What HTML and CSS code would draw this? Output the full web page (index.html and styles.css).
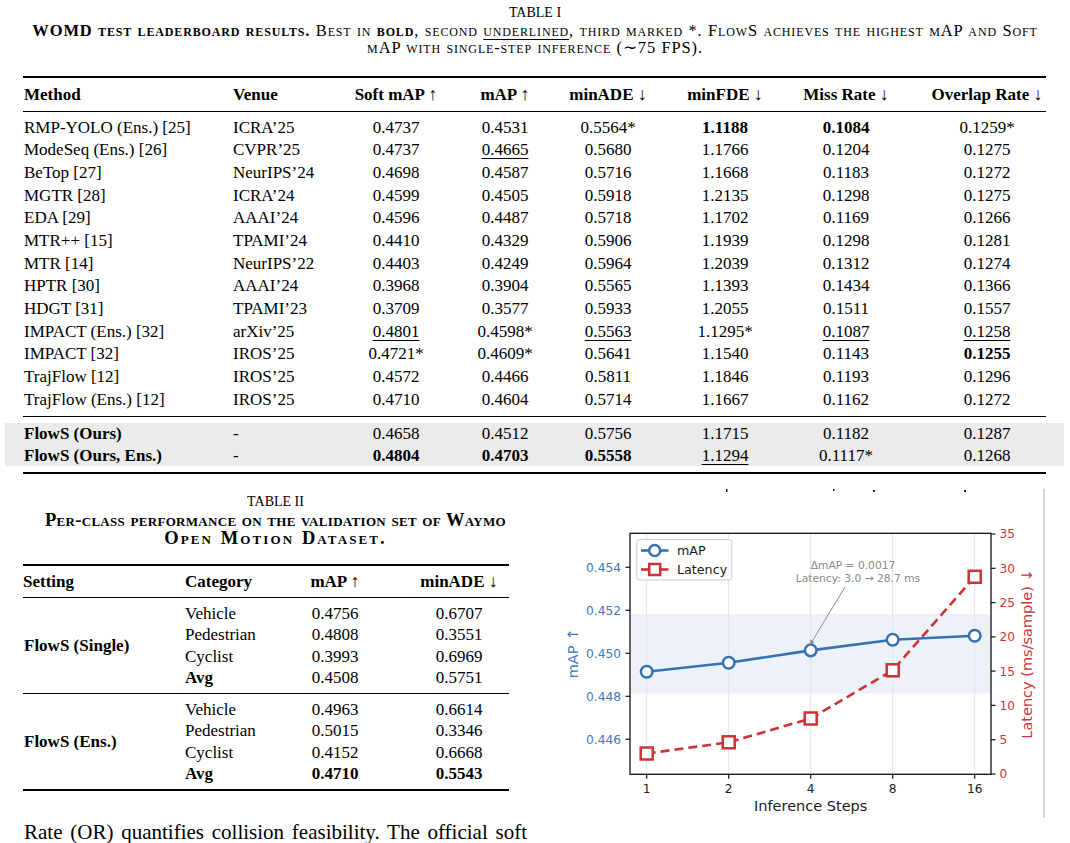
FILE: index.html
```html
<!DOCTYPE html>
<html lang="en">
<head>
  <meta charset="UTF-8" />
  <title>FlowS - Results</title>
  <link rel="stylesheet" href="styles.css">
</head>
<body>
  <div class="table-title">TABLE I</div>
  <div class="caption">
    <b>WOMD test leaderboard results.</b> Best in <b>bold</b>, second <u>underlined</u>, third marked *. FlowS achieves the highest mAP and Soft<br>
    mAP with single-step inference (∼75 FPS).
  </div>

  <div class="t1">
    <div class="head">
      <div class="row">
        <div>Method</div><div class="venue">Venue</div>
        <div class="c">Soft mAP <span class="arr">↑</span></div>
        <div class="c">mAP <span class="arr">↑</span></div>
        <div class="c">minADE <span class="arr">↓</span></div>
        <div class="c">minFDE <span class="arr">↓</span></div>
        <div class="c">Miss Rate <span class="arr">↓</span></div>
        <div class="c last">Overlap Rate <span class="arr">↓</span></div>
      </div>
    </div>

    <div class="body">
      <div class="row"><div>RMP-YOLO (Ens.) [25]</div><div class="venue">ICRA’25</div><div class="c">0.4737</div><div class="c">0.4531</div><div class="c">0.5564*</div><div class="c"><b>1.1188</b></div><div class="c"><b>0.1084</b></div><div class="c last">0.1259*</div></div>
      <div class="row"><div>ModeSeq (Ens.) [26]</div><div class="venue">CVPR’25</div><div class="c">0.4737</div><div class="c"><u>0.4665</u></div><div class="c">0.5680</div><div class="c">1.1766</div><div class="c">0.1204</div><div class="c last">0.1275</div></div>
      <div class="row"><div>BeTop [27]</div><div class="venue">NeurIPS’24</div><div class="c">0.4698</div><div class="c">0.4587</div><div class="c">0.5716</div><div class="c">1.1668</div><div class="c">0.1183</div><div class="c last">0.1272</div></div>
      <div class="row"><div>MGTR [28]</div><div class="venue">ICRA’24</div><div class="c">0.4599</div><div class="c">0.4505</div><div class="c">0.5918</div><div class="c">1.2135</div><div class="c">0.1298</div><div class="c last">0.1275</div></div>
      <div class="row"><div>EDA [29]</div><div class="venue">AAAI’24</div><div class="c">0.4596</div><div class="c">0.4487</div><div class="c">0.5718</div><div class="c">1.1702</div><div class="c">0.1169</div><div class="c last">0.1266</div></div>
      <div class="row"><div>MTR++ [15]</div><div class="venue">TPAMI’24</div><div class="c">0.4410</div><div class="c">0.4329</div><div class="c">0.5906</div><div class="c">1.1939</div><div class="c">0.1298</div><div class="c last">0.1281</div></div>
      <div class="row"><div>MTR [14]</div><div class="venue">NeurIPS’22</div><div class="c">0.4403</div><div class="c">0.4249</div><div class="c">0.5964</div><div class="c">1.2039</div><div class="c">0.1312</div><div class="c last">0.1274</div></div>
      <div class="row"><div>HPTR [30]</div><div class="venue">AAAI’24</div><div class="c">0.3968</div><div class="c">0.3904</div><div class="c">0.5565</div><div class="c">1.1393</div><div class="c">0.1434</div><div class="c last">0.1366</div></div>
      <div class="row"><div>HDGT [31]</div><div class="venue">TPAMI’23</div><div class="c">0.3709</div><div class="c">0.3577</div><div class="c">0.5933</div><div class="c">1.2055</div><div class="c">0.1511</div><div class="c last">0.1557</div></div>
      <div class="row"><div>IMPACT (Ens.) [32]</div><div class="venue">arXiv’25</div><div class="c"><u>0.4801</u></div><div class="c">0.4598*</div><div class="c"><u>0.5563</u></div><div class="c">1.1295*</div><div class="c"><u>0.1087</u></div><div class="c last"><u>0.1258</u></div></div>
      <div class="row"><div>IMPACT [32]</div><div class="venue">IROS’25</div><div class="c">0.4721*</div><div class="c">0.4609*</div><div class="c">0.5641</div><div class="c">1.1540</div><div class="c">0.1143</div><div class="c last"><b>0.1255</b></div></div>
      <div class="row"><div>TrajFlow [12]</div><div class="venue">IROS’25</div><div class="c">0.4572</div><div class="c">0.4466</div><div class="c">0.5811</div><div class="c">1.1846</div><div class="c">0.1193</div><div class="c last">0.1296</div></div>
      <div class="row"><div>TrajFlow (Ens.) [12]</div><div class="venue">IROS’25</div><div class="c">0.4710</div><div class="c">0.4604</div><div class="c">0.5714</div><div class="c">1.1667</div><div class="c">0.1162</div><div class="c last">0.1272</div></div>
    </div>

    <div class="ours">
      <div class="row"><div><b>FlowS (Ours)</b></div><div class="venue">-</div><div class="c">0.4658</div><div class="c">0.4512</div><div class="c">0.5756</div><div class="c">1.1715</div><div class="c">0.1182</div><div class="c last">0.1287</div></div>
      <div class="row"><div><b>FlowS (Ours, Ens.)</b></div><div class="venue">-</div><div class="c"><b>0.4804</b></div><div class="c"><b>0.4703</b></div><div class="c"><b>0.5558</b></div><div class="c"><u>1.1294</u></div><div class="c">0.1117*</div><div class="c last">0.1268</div></div>
    </div>
  </div>
  <div class="rule-end"></div>

  <div class="lower">
    <div class="left-col">
      <div class="table-title t2-title">TABLE II</div>
      <div class="caption2">Per-class performance on the validation set of Waymo<br><span class="wide">Open Motion Dataset.</span></div>

      <div class="t2">
        <div class="t2-head">
          <div>Setting</div><div class="cat">Category</div>
          <div class="c">mAP <span class="arr">↑</span></div>
          <div class="c last">minADE <span class="arr">↓</span></div>
        </div>
        <div class="t2-group">
          <div class="setting"><b>FlowS (Single)</b></div>
          <div class="cat">Vehicle</div><div class="c">0.4756</div><div class="c last">0.6707</div>
          <div class="cat">Pedestrian</div><div class="c">0.4808</div><div class="c last">0.3551</div>
          <div class="cat">Cyclist</div><div class="c">0.3993</div><div class="c last">0.6969</div>
          <div class="cat"><b>Avg</b></div><div class="c">0.4508</div><div class="c last">0.5751</div>
        </div>
        <div class="t2-group bottom">
          <div class="setting"><b>FlowS (Ens.)</b></div>
          <div class="cat">Vehicle</div><div class="c">0.4963</div><div class="c last">0.6614</div>
          <div class="cat">Pedestrian</div><div class="c">0.5015</div><div class="c last">0.3346</div>
          <div class="cat">Cyclist</div><div class="c">0.4152</div><div class="c last">0.6668</div>
          <div class="cat"><b>Avg</b></div><div class="c"><b>0.4710</b></div><div class="c last"><b>0.5543</b></div>
        </div>
      </div>

      <p class="para">Rate (OR) quantifies collision feasibility. The official soft</p>
    </div>

    <svg class="chart" width="530" height="363" viewBox="540 480 530 363">
      <!-- clipped bits of the text above and the page edge -->
      <g fill="#222">
        <rect x="726" y="489" width="1.5" height="3"/>
        <rect x="833" y="489" width="1.5" height="2"/>
        <rect x="873" y="490" width="2" height="2"/>
        <rect x="964" y="490" width="2" height="2"/>
      </g>
      <line x1="1044" y1="489" x2="1044" y2="818" stroke="#c8c8c8" stroke-width="1.5"/>

      <rect x="630" y="614" width="361" height="79.5" fill="#edf2f9"/>
      <g stroke="#e3e3e3" stroke-width="1">
        <line x1="646.7" y1="533.3" x2="646.7" y2="774.3"/>
        <line x1="728.7" y1="533.3" x2="728.7" y2="774.3"/>
        <line x1="810.7" y1="533.3" x2="810.7" y2="774.3"/>
        <line x1="892.7" y1="533.3" x2="892.7" y2="774.3"/>
        <line x1="974.7" y1="533.3" x2="974.7" y2="774.3"/>
      </g>

      <!-- latency -->
      <polyline points="646.7,753.5 728.7,742.3 810.7,718.5 892.7,670.3 974.7,576.8" fill="none" stroke="#c93434" stroke-width="2.6" stroke-dasharray="9 5"/>
      <g fill="#fff" stroke="#c93434" stroke-width="2.5">
        <rect x="640.7" y="747.5" width="12" height="12"/>
        <rect x="722.7" y="736.3" width="12" height="12"/>
        <rect x="804.7" y="712.5" width="12" height="12"/>
        <rect x="886.7" y="664.3" width="12" height="12"/>
        <rect x="968.7" y="570.8" width="12" height="12"/>
      </g>

      <!-- mAP -->
      <polyline points="646.7,671.8 728.7,662.7 810.7,650.4 892.7,639.7 974.7,635.8" fill="none" stroke="#3672b2" stroke-width="2.6"/>
      <g fill="#fff" stroke="#3672b2" stroke-width="2.5">
        <circle cx="646.7" cy="671.8" r="5.8"/>
        <circle cx="728.7" cy="662.7" r="5.8"/>
        <circle cx="810.7" cy="650.4" r="5.8"/>
        <circle cx="892.7" cy="639.7" r="5.8"/>
        <circle cx="974.7" cy="635.8" r="5.8"/>
      </g>

      <!-- annotation -->
      <g class="note">
        <text x="853" y="569">ΔmAP = 0.0017</text>
        <text x="858" y="582">Latency: 3.0 → 28.7 ms</text>
      </g>
      <line x1="845" y1="587" x2="810.5" y2="644" stroke="#8a8a8a" stroke-width="1"/>
      <path d="M809.8 646 L810.3 639.6 L814.2 642 Z" fill="#8a8a8a"/>

      <!-- axes -->
      <rect x="630" y="533.3" width="361" height="241" fill="none" stroke="#111" stroke-width="1.3"/>
      <g stroke="#111" stroke-width="1.2">
        <line x1="625.5" y1="567.3" x2="630" y2="567.3"/>
        <line x1="625.5" y1="610.3" x2="630" y2="610.3"/>
        <line x1="625.5" y1="653.3" x2="630" y2="653.3"/>
        <line x1="625.5" y1="696.3" x2="630" y2="696.3"/>
        <line x1="625.5" y1="739.3" x2="630" y2="739.3"/>
        <line x1="991" y1="534" x2="995.5" y2="534"/>
        <line x1="991" y1="568.3" x2="995.5" y2="568.3"/>
        <line x1="991" y1="602.6" x2="995.5" y2="602.6"/>
        <line x1="991" y1="636.9" x2="995.5" y2="636.9"/>
        <line x1="991" y1="671.1" x2="995.5" y2="671.1"/>
        <line x1="991" y1="705.4" x2="995.5" y2="705.4"/>
        <line x1="991" y1="739.7" x2="995.5" y2="739.7"/>
        <line x1="991" y1="774" x2="995.5" y2="774"/>
        <line x1="646.7" y1="774.3" x2="646.7" y2="778.8"/>
        <line x1="728.7" y1="774.3" x2="728.7" y2="778.8"/>
        <line x1="810.7" y1="774.3" x2="810.7" y2="778.8"/>
        <line x1="892.7" y1="774.3" x2="892.7" y2="778.8"/>
        <line x1="974.7" y1="774.3" x2="974.7" y2="778.8"/>
      </g>

      <g class="tick blue">
        <text x="621" y="571.7">0.454</text>
        <text x="621" y="614.7">0.452</text>
        <text x="621" y="657.7">0.450</text>
        <text x="621" y="700.7">0.448</text>
        <text x="621" y="743.7">0.446</text>
      </g>
      <g class="tick red">
        <text x="999.5" y="538.4">35</text>
        <text x="999.5" y="572.7">30</text>
        <text x="999.5" y="607">25</text>
        <text x="999.5" y="641.3">20</text>
        <text x="999.5" y="675.5">15</text>
        <text x="999.5" y="709.8">10</text>
        <text x="999.5" y="744.1">5</text>
        <text x="999.5" y="778.4">0</text>
      </g>
      <g class="tick xt">
        <text x="646.7" y="792.5">1</text>
        <text x="728.7" y="792.5">2</text>
        <text x="810.7" y="792.5">4</text>
        <text x="892.7" y="792.5">8</text>
        <text x="974.7" y="792.5">16</text>
      </g>
      <text class="axlabel" x="810.7" y="811">Inference Steps</text>
      <text class="axlabel blue-l" transform="translate(578,653.5) rotate(-90)">mAP ↑</text>
      <text class="axlabel red-l" transform="translate(1032,654) rotate(-90)">Latency (ms/sample) ↓</text>

      <!-- legend -->
      <rect x="636.8" y="539.5" width="95" height="40.5" rx="3" fill="#fff" fill-opacity="0.85" stroke="#cccccc" stroke-width="1"/>
      <line x1="641" y1="550.5" x2="668.5" y2="550.5" stroke="#3672b2" stroke-width="2.6"/>
      <circle cx="654.7" cy="550.5" r="5.5" fill="#fff" stroke="#3672b2" stroke-width="2.5"/>
      <line x1="641" y1="569.5" x2="668.5" y2="569.5" stroke="#c93434" stroke-width="2.6"/>
      <rect x="649.2" y="564" width="11" height="11" fill="#fff" stroke="#c93434" stroke-width="2.5"/>
      <text class="legend" x="677" y="555">mAP</text>
      <text class="legend" x="677" y="574">Latency</text>
    </svg>
  </div>
</body>
</html>
```

FILE: styles.css
```css
body {
  margin: 0;
  width: 1070px;
  height: 843px;
  overflow: hidden;
  background: #fff;
  color: #000;
  font-family: "Liberation Serif", "Times New Roman", serif;
}

b {
  font-weight: bold;
}

u {
  text-decoration-thickness: 1px;
  text-underline-offset: 3px;
}

.table-title {
  font-size: 14px;
  line-height: 17px;
  text-align: center;
  padding-top: 3.5px;
}

.caption {
  margin-top: 1px;
  font-size: 16.5px;
  line-height: 17px;
  text-align: center;
  font-variant: small-caps;
  letter-spacing: 0.85px;
  word-spacing: 0.5px;
  white-space: nowrap;
}

/* Table I */
.t1 {
  margin: 20.5px 0 0 23px;
  width: 1023px;
  font-size: 17px;
}

.t1 .row {
  display: grid;
  grid-template-columns: 205px 112px 112px 106px 100px 134px 108px 146px;
  line-height: 22.67px;
  white-space: nowrap;
}

.t1 .row > div:first-child {
  padding-left: 1px;
}

.venue {
  padding-left: 5px;
}

.c {
  text-align: center;
}

.t1 .last {
  padding-left: 28px;
}

.t1 .head {
  border-top: 2px solid #000;
  border-bottom: 1px solid #000;
}

.t1 .head .row {
  line-height: 33px;
  font-weight: bold;
}

.arr {
  font-weight: normal;
  font-size: 18px;
}

.t1 .body {
  padding: 4.6px 0 5px;
  border-bottom: 1px solid #000;
}

.t1 .ours {
  margin: 6px -18px 0;
  padding: 0 18px;
  background: #ebebeb;
}

.t1 .ours .row {
  line-height: 21.5px;
}

.rule-end {
  width: 1023px;
  height: 2px;
  margin: 5.5px 0 0 23px;
  background: #000;
}

/* lower half */
.lower {
  display: flex;
  align-items: flex-start;
  gap: 12px;
}

.left-col {
  width: 505px;
  margin-left: 23px;
}

.t2-title {
  margin-top: 16px;
}

.caption2 {
  font-size: 18.5px;
  line-height: 18px;
  font-weight: bold;
  text-align: center;
  font-variant: small-caps;
  letter-spacing: 0.3px;
  word-spacing: 0.5px;
  margin-top: 1px;
  white-space: nowrap;
}

.caption2 .wide {
  letter-spacing: 2.1px;
  word-spacing: 1px;
}

.t2 {
  margin-top: 17px;
  width: 486px;
  font-size: 17px;
}

.t2-head,
.t2-group {
  display: grid;
  grid-template-columns: 157px 110px 90px 129px;
  white-space: nowrap;
}

.t2-head {
  border-top: 2px solid #000;
  border-bottom: 1px solid #000;
  line-height: 31px;
  font-weight: bold;
}

.t2-group {
  grid-auto-rows: 21.5px;
  line-height: 21.5px;
  padding: 4.5px 0 4.5px;
  border-bottom: 1px solid #000;
}

.t2-group.bottom {
  border-bottom: 2px solid #000;
}

.setting {
  grid-row: span 4;
  align-self: center;
  padding-left: 1px;
}

.cat {
  padding-left: 5px;
}

.t2 .last {
  padding-left: 29px;
}

.para {
  margin: 29px 0 0;
  padding: 0 1px;
  font-size: 21px;
  line-height: 24px;
  text-align: justify;
  text-align-last: justify;
  white-space: nowrap;
}

/* chart */
.chart {
  display: block;
  flex: none;
  margin-top: 6.5px;
  font-family: "DejaVu Sans", sans-serif;
}

.note text {
  font-size: 10.7px;
  fill: #8a8a8a;
  text-anchor: middle;
}

.tick text {
  font-size: 12.2px;
}

.tick.blue text {
  fill: #3d78b8;
  text-anchor: end;
}

.tick.red text {
  fill: #cc3636;
}

.tick.xt text {
  fill: #1a1a1a;
  text-anchor: middle;
}

.axlabel {
  font-size: 14.5px;
  fill: #1a1a1a;
  text-anchor: middle;
}

.axlabel.blue-l {
  fill: #3d78b8;
}

.axlabel.red-l {
  fill: #cc3636;
}

.legend {
  font-size: 12.7px;
  fill: #1a1a1a;
}
```
